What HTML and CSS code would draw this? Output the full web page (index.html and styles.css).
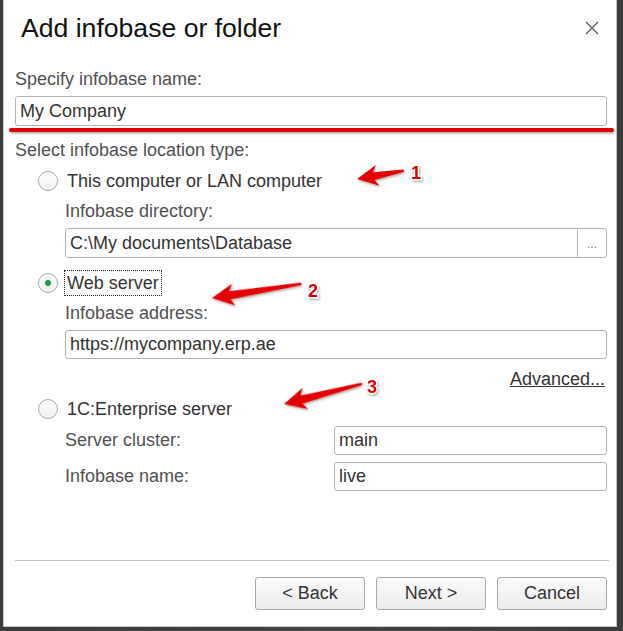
FILE: index.html
```html
<!DOCTYPE html>
<html lang="en">
<head>
    <meta charset="UTF-8">
    <meta name="viewport" content="width=device-width, initial-scale=1.0">
    <title>Add infobase or folder</title>
    <link rel="stylesheet" href="styles.css">
</head>
<body>
    <div class="screen">
        <div class="dialog">
            <div class="dialog-head">
                <h1 class="dialog-title">Add infobase or folder</h1>
                <button class="close-btn" aria-label="Close">
                    <svg width="14" height="14" viewBox="0 0 14 14">
                        <path d="M1 1 L13 13 M13 1 L1 13" stroke="#5f5f5f" stroke-width="1.3" fill="none"/>
                    </svg>
                </button>
            </div>

            <div class="dialog-body">
                <div class="caption caption-name">Specify infobase name:</div>
                <input class="field field-name" type="text" value="My Company">

                <div class="caption caption-type">Select infobase location type:</div>

                <div class="options">
                    <label class="radio-row row-local">
                        <span class="radio"></span>
                        <span class="radio-text">This computer or LAN computer</span>
                    </label>
                    <div class="sub">
                        <div class="caption caption-sub">Infobase directory:</div>
                        <div class="field-group">
                            <input class="field-inner" type="text" value="C:\My documents\Database">
                            <span class="field-btn">...</span>
                        </div>
                    </div>

                    <label class="radio-row row-web">
                        <span class="radio checked"></span>
                        <span class="radio-text focused">Web server</span>
                    </label>
                    <div class="sub">
                        <div class="caption caption-sub">Infobase address:</div>
                        <input class="field field-address" type="text" value="https://mycompany.erp.ae">
                        <div class="link-row"><a class="link" href="#">Advanced...</a></div>
                    </div>

                    <label class="radio-row row-server">
                        <span class="radio"></span>
                        <span class="radio-text">1C:Enterprise server</span>
                    </label>
                    <div class="sub">
                        <div class="pair">
                            <span class="pair-label">Server cluster:</span>
                            <input class="field field-short" type="text" value="main">
                        </div>
                        <div class="pair">
                            <span class="pair-label">Infobase name:</span>
                            <input class="field field-short" type="text" value="live">
                        </div>
                    </div>
                </div>
            </div>

            <div class="dialog-foot">
                <button class="btn">&lt; Back</button>
                <button class="btn">Next &gt;</button>
                <button class="btn">Cancel</button>
            </div>
        </div>

        <!-- hand-drawn markers on top of the dialog -->
        <svg class="marks" width="623" height="631" viewBox="0 0 623 631">
            <defs>
                <filter id="shade" filterUnits="userSpaceOnUse" x="0" y="0" width="623" height="631">
                    <feDropShadow dx="1" dy="1.5" stdDeviation="1" flood-color="#000" flood-opacity="0.35"/>
                </filter>
            </defs>

            <rect x="9" y="128" width="605" height="4" rx="2" fill="#e00000" filter="url(#shade)"/>

            <g fill="#e20000" filter="url(#shade)">
                <path transform="translate(357 179) rotate(-10)" d="M0 0 L21 -10.5 L17 -3.8 L47 -1.3 Q48.5 0 47 1.3 L17 4 L21 10.5 Z"/>
                <path transform="translate(212 298) rotate(-9)" d="M0 0 L22 -11 L18 -4 L90 -1.2 Q91.5 0 90 1.2 L18 4.2 L22 11 Z"/>
                <path transform="translate(284 404) rotate(-14.5)" d="M0 0 L22 -11 L18 -4 L80 -1.2 Q81.5 0 80 1.2 L18 4.2 L22 11 Z"/>
            </g>

            <g class="mark-num" filter="url(#shade)">
                <text x="411" y="179">1</text>
                <text x="308" y="297">2</text>
                <text x="367" y="393">3</text>
            </g>
        </svg>
    </div>
</body>
</html>
```

FILE: styles.css
```css
* {
    box-sizing: border-box;
}
body {
    margin: 0;
    padding: 0;
    background: #3a3a3a;
    font-family: 'Liberation Sans', Arial, sans-serif;
    color: #444;
}
.screen {
    position: relative;
    width: 623px;
    height: 631px;
    overflow: hidden;
    background: linear-gradient(90deg, #3b3b3b, #454545 50%, #3b3b3b);
}
.dialog {
    margin-left: 3px;
    width: 614px;
    height: 627px;
    background: #fff;
    border: 1px solid #c4c4c4;
    border-top: none;
    display: flex;
    flex-direction: column;
}

/* header */
.dialog-head {
    height: 55px;
    display: flex;
    align-items: center;
    justify-content: space-between;
    padding: 0 17px 0 17px;
}
.dialog-title {
    margin: 0;
    font-size: 26.6px;
    font-weight: normal;
    color: #111;
    line-height: 56px;
}
.close-btn {
    border: none;
    background: none;
    padding: 0;
    width: 14px;
    height: 14px;
    display: flex;
}

/* body */
.dialog-body {
    padding: 0 9px 0 11px;
}
.caption {
    font-size: 18px;
    line-height: 20px;
    color: #505050;
}
.caption-name {
    margin-top: 14px;
}
.caption-type {
    margin-top: 14px;
}
.caption-sub {
    margin-top: 10px;
}
.field {
    display: block;
    width: 100%;
    height: 30px;
    margin-top: 7px;
    padding: 0 4px;
    border: 1px solid #b2b2b2;
    border-radius: 3px;
    font-family: inherit;
    font-size: 18px;
    color: #333;
    background: #fff;
    outline: none;
}
.field-address {
    height: 29px;
}
.field-group {
    display: flex;
    height: 30px;
    margin-top: 7px;
    border: 1px solid #b2b2b2;
    border-radius: 3px;
    overflow: hidden;
}
.field-inner {
    flex: 1;
    min-width: 0;
    border: none;
    padding: 0 4px;
    font-family: inherit;
    font-size: 18px;
    color: #333;
    outline: none;
}
.field-btn {
    width: 29px;
    border-left: 1px solid #b2b2b2;
    font-size: 12px;
    color: #777;
    text-align: center;
    line-height: 30px;
}

/* radio options */
.options {
    display: flex;
    flex-direction: column;
}
.radio-row {
    display: flex;
    align-items: center;
    height: 20px;
    margin-left: 23px;
    gap: 9px;
}
.row-local {
    margin-top: 11px;
}
.row-web {
    margin-top: 15px;
}
.row-server {
    margin-top: 10px;
}
.radio {
    width: 20px;
    height: 20px;
    border-radius: 50%;
    border: 1px solid #a6a6a6;
    background: linear-gradient(#fff, #f1f1f1);
    display: flex;
    align-items: center;
    justify-content: center;
    flex-shrink: 0;
}
.radio.checked::after {
    content: "";
    width: 6px;
    height: 6px;
    border-radius: 50%;
    background: #17964a;
}
.radio-text {
    font-size: 18px;
    line-height: 22px;
    color: #333;
}
.radio-text.focused {
    outline: 1px dotted #222;
    outline-offset: 1px;
    padding: 0 1px;
    margin-left: -1px;
}
.sub {
    margin-left: 50px;
}
.link-row {
    margin-top: 10px;
    height: 20px;
    text-align: right;
    padding-right: 2px;
}
.link {
    font-size: 18px;
    line-height: 20px;
    color: #333;
    text-decoration: underline;
}
.pair {
    display: grid;
    grid-template-columns: 269px 1fr;
    align-items: center;
    margin-top: 7px;
}
.pair-label {
    font-size: 18px;
    color: #505050;
}
.field-short {
    margin-top: 0;
    height: 29px;
}

/* footer */
.dialog-foot {
    margin: auto 7px 0 11px;
    border-top: 1px solid #c4c4c4;
    padding: 16px 2px 16px 0;
    display: flex;
    justify-content: flex-end;
    gap: 11px;
}
.btn {
    width: 110px;
    height: 33px;
    border: 1px solid #a9a9a9;
    border-radius: 3px;
    background: linear-gradient(#fbfbfb, #ececec);
    font-family: inherit;
    font-size: 18px;
    color: #333;
}

/* markers */
.marks {
    position: absolute;
    top: 0;
    left: 0;
    pointer-events: none;
}
.mark-num text {
    font-family: 'Liberation Sans', Arial, sans-serif;
    font-weight: bold;
    font-size: 18px;
    fill: #d80000;
    stroke: #fff;
    stroke-width: 2.5px;
    paint-order: stroke;
}
```
